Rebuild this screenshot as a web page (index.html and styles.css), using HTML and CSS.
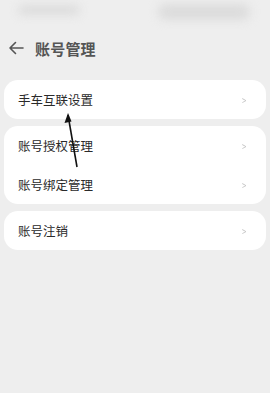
FILE: index.html
```html
<!DOCTYPE html>
<html lang="zh-CN">
<head>
    <meta charset="UTF-8">
    <meta name="viewport" content="width=device-width, initial-scale=1.0">
    <title>账号管理</title>
    <link rel="stylesheet" href="styles.css">
</head>
<body>
    <div class="status-bar">
        <span class="blur blur-left"></span>
        <span class="blur blur-right"></span>
    </div>

    <div class="header">
        <svg class="back" width="16" height="14" viewBox="0 0 16 14">
            <path d="M15 7H2M7.5 1.5L2 7l5.5 5.5" fill="none" stroke="#555" stroke-width="1.6" stroke-linecap="round" stroke-linejoin="round"/>
        </svg>
        <h1>账号管理</h1>
    </div>

    <div class="card">
        <div class="row"><span>手车互联设置</span><span class="chevron">&gt;</span></div>
    </div>
    <div class="card">
        <div class="row"><span>账号授权管理</span><span class="chevron">&gt;</span></div>
        <div class="row"><span>账号绑定管理</span><span class="chevron">&gt;</span></div>
    </div>
    <div class="card">
        <div class="row"><span>账号注销</span><span class="chevron">&gt;</span></div>
    </div>

    <!-- annotation arrow drawn over the list -->
    <svg class="pointer" width="20" height="60" viewBox="0 0 20 60">
        <path d="M15 56L6 4" stroke="#111" stroke-width="1.6" fill="none"/>
        <path d="M6 2L2.5 12L9.5 10.5Z" fill="#111"/>
    </svg>
</body>
</html>
```

FILE: styles.css
```css
body {
    margin: 0;
    background: #eeeeee;
    font-family: "Noto Sans CJK SC", "Noto Sans", sans-serif;
    color: #2a2a2a;
    position: relative;
    min-height: 393px;
}
.status-bar {
    height: 30px;
    position: relative;
}
.blur {
    position: absolute;
    background: #dcdcdc;
    filter: blur(5px);
    border-radius: 8px;
}
.blur-left {
    left: 18px;
    top: 5px;
    width: 62px;
    height: 10px;
}
.blur-right {
    left: 158px;
    top: 4px;
    width: 92px;
    height: 16px;
}
.header {
    display: flex;
    align-items: center;
    height: 36px;
    padding-left: 8px;
    margin-bottom: 14px;
}
.back {
    margin-right: 11px;
}
.header h1 {
    margin: 0;
    font-size: 15px;
    font-weight: 700;
    color: #555;
    letter-spacing: 0.2px;
}
.card {
    background: #fff;
    margin: 0 4px 7px;
    border-radius: 14px;
}
.row {
    display: flex;
    justify-content: space-between;
    align-items: center;
    height: 39px;
    padding: 0 19px 0 14px;
    font-size: 12.5px;
}
.chevron {
    color: #c4c4c4;
    font-size: 11px;
    transform: scaleX(0.7);
}
.pointer {
    position: absolute;
    left: 62px;
    top: 111px;
}
```
